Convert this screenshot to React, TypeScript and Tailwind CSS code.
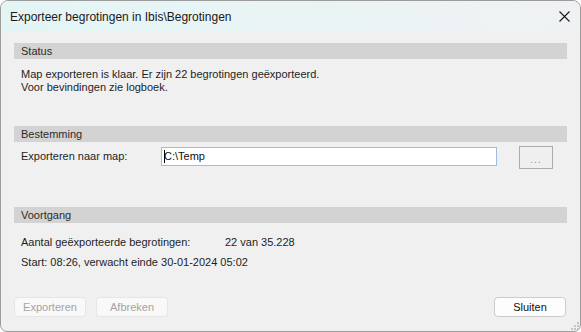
import React from "react";

const font = { fontFamily: '"Liberation Sans", Arial, sans-serif' };

function SectionBar({ children }: { children: React.ReactNode }) {
  return (
    <div className="h-[16px] bg-[#d3d3d3] pl-[7px] text-[11px] leading-[16px] text-[#2b2b2b]">
      {children}
    </div>
  );
}

export default function App() {
  return (
    <div
      className="w-[581px] h-[332px] overflow-hidden bg-white"
      style={font}
    >
      <div className="relative w-[581px] h-[332px] flex flex-col rounded-t-[8px] rounded-b-[7px] border border-[#9c9c9c] bg-[#f0f0f0] overflow-hidden">
        {/* Title bar */}
        <div className="h-[30px] shrink-0 flex items-center bg-gradient-to-r from-[#e4f5f6] to-[#eff2f3] pl-[9px] pr-[9px]">
          <div className="text-[12px] leading-[16px] text-[#1a1a1a] pt-[1px]">
            Exporteer begrotingen in Ibis\Begrotingen
          </div>
          <div className="ml-auto flex items-center justify-center w-[12px] h-[12px] mr-[1px] mt-[1px]">
            <svg width="11" height="11" viewBox="0 0 11 11">
              <path d="M0.5 0.5 L10.5 10.5 M10.5 0.5 L0.5 10.5" stroke="#1a1a1a" strokeWidth="1.1" fill="none" />
            </svg>
          </div>
        </div>

        {/* Body */}
        <div className="flex-1 flex flex-col px-[13px] pt-[12px] text-[11px] text-[#1e1e1e]">
          <SectionBar>Status</SectionBar>
          <div className="mt-[9px] pl-[7px] leading-[13px]">
            <div>Map exporteren is klaar. Er zijn 22 begrotingen geëxporteerd.</div>
            <div>Voor bevindingen zie logboek.</div>
          </div>

          <div className="mt-[32px]">
            <SectionBar>Bestemming</SectionBar>
          </div>
          <div className="mt-[4px] flex items-start pl-[7px] h-[23px]">
            <div className="w-[140px] leading-[13px] mt-[4px]">Exporteren naar map:</div>
            <div className="mt-[1px] w-[336px] h-[19px] border border-[#a3bbdc] bg-white flex items-center pl-[2px]">
              <span className="inline-block w-px h-[13px] bg-black -mr-px relative z-10"></span>
              <span className="leading-[13px] text-[#111]">C:\Temp</span>
            </div>
            <div className="ml-[22px] w-[34px] h-[23px] border border-[#adadad] bg-[#efefef] flex items-center justify-center text-[10px] text-[#9a8a9a] tracking-[1px] pt-[3px]">
              ...
            </div>
          </div>

          <div className="mt-[38px]">
            <SectionBar>Voortgang</SectionBar>
          </div>
          <div className="mt-[13px] pl-[7px] leading-[13px] flex">
            <div className="w-[204px]">Aantal geëxporteerde begrotingen:</div>
            <div>22 van 35.228</div>
          </div>
          <div className="mt-[7px] pl-[7px] leading-[13px]">
            Start: 08:26, verwacht einde 30-01-2024 05:02
          </div>

          <div className="mt-[28px] flex items-center">
            <div className="w-[72px] h-[20px] rounded-[4px] border border-[#e6e6e6] bg-[#f9f9f9] text-[#a3a3a3] flex items-center justify-center leading-[13px]">
              Exporteren
            </div>
            <div className="ml-[10px] w-[72px] h-[20px] rounded-[4px] border border-[#e6e6e6] bg-[#f9f9f9] text-[#a3a3a3] flex items-center justify-center leading-[13px]">
              Afbreken
            </div>
            <div className="ml-auto mr-[1px] w-[72px] h-[20px] rounded-[4px] border border-[#cdcdcd] bg-[#fdfdfd] text-[#111] flex items-center justify-center leading-[13px]">
              Sluiten
            </div>
          </div>
        </div>

        <svg className="absolute right-[1px] bottom-[1px]" width="8" height="8" viewBox="0 0 8 8">
          <rect x="6" y="0" width="2" height="2" fill="#c4c4c4" />
          <rect x="3" y="3" width="2" height="2" fill="#c4c4c4" />
          <rect x="6" y="3" width="2" height="2" fill="#c4c4c4" />
          <rect x="0" y="6" width="2" height="2" fill="#c4c4c4" />
          <rect x="3" y="6" width="2" height="2" fill="#c4c4c4" />
          <rect x="6" y="6" width="2" height="2" fill="#c4c4c4" />
        </svg>
      </div>
    </div>
  );
}
